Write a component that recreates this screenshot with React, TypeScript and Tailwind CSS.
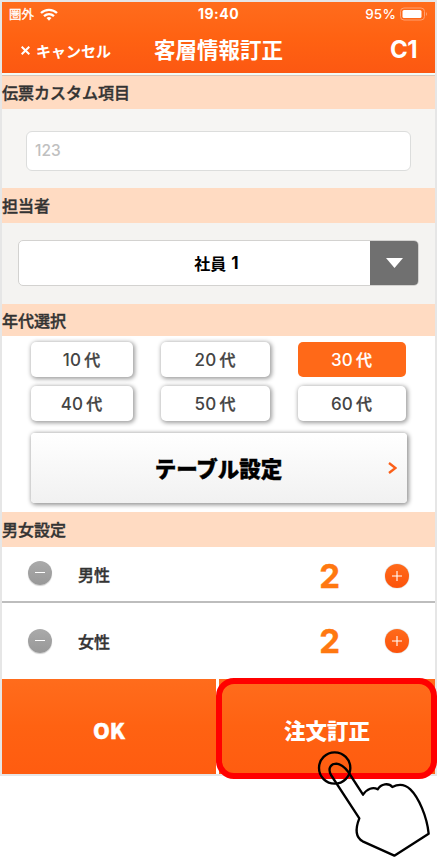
import React from "react";

type Age = { n: string; on?: boolean };

const ages: Age[] = [
  { n: "10" },
  { n: "20" },
  { n: "30", on: true },
  { n: "40" },
  { n: "50" },
  { n: "60" },
];

function Band({ children, className }: { children: React.ReactNode; className: string }) {
  return (
    <div className={`flex shrink-0 items-center bg-[#ffdbc2] pb-px text-base leading-none font-medium text-[#333] [-webkit-text-stroke:0.4px] ${className}`}>
      {children}
    </div>
  );
}

function AgeButton({ n, on }: Age) {
  return (
    <button
      className={`flex h-[35px] items-center justify-center gap-[3px] rounded-[5px] text-[17px] leading-none font-medium ${
        on
          ? "bg-[#ff6918] text-white"
          : "bg-white text-[#444] shadow-[1px_1px_4px_1px_rgba(0,0,0,0.38)]"
      }`}
    >
      <span className="pt-0.5 font-[Inter] tracking-[0.2px]">{n}</span>
      <span className="pb-px text-[16px] [-webkit-text-stroke:0.3px]">代</span>
    </button>
  );
}

function Counter({
  label,
  value,
  className,
  minusClass,
  valueClass,
}: {
  label: string;
  value: string;
  className: string;
  minusClass: string;
  valueClass: string;
}) {
  return (
    <div className={`flex shrink-0 items-center px-[26px] ${className}`}>
      <button className={`flex size-6 items-center justify-center rounded-full bg-linear-to-b from-[#aaa] to-[#989898] shadow-[0_1px_1px_rgba(0,0,0,0.2)] ${minusClass}`}>
        <span className="h-px w-[10px] bg-white" />
      </button>
      <span className="ml-[26px] text-base leading-none font-medium text-[#333] [-webkit-text-stroke:0.4px]">{label}</span>
      <div className={`ml-auto flex items-center ${valueClass}`}>
        <span className="pt-0.5 font-[Inter] text-[33px] leading-none font-bold text-[#ff7810] [-webkit-text-stroke:0.4px]">{value}</span>
        <button className="ml-[45px] flex size-6 items-center justify-center rounded-full bg-linear-to-b from-[#ff6a1a] to-[#fc520a] shadow-[0_0_1px_rgba(0,0,0,0.5)]">
          <svg width="10" height="10" viewBox="0 0 10 10" stroke="white" strokeWidth="1.1">
            <path d="M5 0V10M0 5H10" />
          </svg>
        </button>
      </div>
    </div>
  );
}

export default function App() {
  return (
    <div className="relative h-[857px] w-[437px] overflow-hidden bg-white font-['Noto_Sans_CJK_JP',sans-serif]">
      <div className="flex h-[776px] flex-col border-2 border-[#e6e6e6] bg-white">
        <header className="h-[71px] shrink-0 bg-linear-to-b from-[#ff6c1c] via-[#ff6212] to-[#fc5812] text-white">
          <div className="flex h-6 items-center px-[7px] leading-none">
            <div className="flex flex-1 items-center gap-[6px]">
              <span className="text-[12.5px] [-webkit-text-stroke:0.3px]">圏外</span>
              <svg width="18" height="13" viewBox="0 0 18 13" fill="none" stroke="white" strokeWidth="2.3">
                <path d="M1 5C5.500 .7 12.500 .7 17 5M4 8.200C7 5.500 11 5.500 14 8.200" />
                <path d="M6.500 10Q9 8 11.500 10L9 12.700Z" fill="white" stroke="none" />
              </svg>
            </div>
            <span className="font-[Inter] text-[14px] font-bold tracking-[0.5px]">19:40</span>
            <div className="flex flex-1 items-center justify-end gap-[4px]">
              <span className="pt-px font-[Inter] text-[13.5px] font-medium tracking-[0.2px]">95%</span>
              <svg width="28" height="14" viewBox="0 0 28 14">
                <rect x="0.5" y="1" width="24" height="12" rx="3.500" fill="none" stroke="#ffa070" />
                <rect x="2.500" y="3" width="19" height="8" rx="1.500" fill="white" />
                <path d="M26 5Q28 7 26 9Z" fill="#ffa070" />
              </svg>
            </div>
          </div>
          <div className="flex h-[47px] items-center leading-none">
            <span className="flex w-[152px] items-center gap-[6px] pt-0.5 pl-[19px] text-[15px] font-bold">
              <svg width="9" height="9" viewBox="0 0 9 9" stroke="white" strokeWidth="2">
                <path d="M.7 .7 8.300 8.300M8.300 .7 .7 8.300" />
              </svg>
              キャンセル
            </span>
            <span className="pb-0.5 text-[21.5px] font-bold">客層情報訂正</span>
            <span className="mr-[18px] ml-auto pt-px font-[Inter] text-[24px] font-bold tracking-[-0.5px]">C1</span>
          </div>
        </header>
        <div className="h-[3px] shrink-0 border-b border-[#d8c6ba] bg-[#f1fbf8]" />
        <Band className="h-[33px]">伝票カスタム項目</Band>
        <div className="h-[79px] shrink-0 bg-[#f6f5f3] px-6 pt-[22px]">
          <div className="flex h-10 items-center rounded-[6px] border border-[#dcdddc] bg-white pl-2 font-[Inter] text-[15.5px] leading-none font-medium text-[#c0c0c0]">
            123
          </div>
        </div>
        <Band className="h-[35px]">担当者</Band>
        <div className="h-[81px] shrink-0 bg-[#f4f3f1] pt-[17px] pr-4 pl-4">
          <div className="flex h-[46px] overflow-hidden rounded-[5px] border border-[#d3d2d0] bg-white">
            <div className="flex flex-1 items-center justify-center pl-[44px] text-[16px] leading-none font-bold whitespace-pre text-black">
              社員<span className="pl-[5px] font-[Inter] text-[17px]">1</span>
            </div>
            <div className="-my-px -mr-px flex w-[49px] items-center justify-center bg-[#707070]">
              <svg width="17" height="10" viewBox="0 0 17 10">
                <path d="M0 0H17L8.500 10Z" fill="white" />
              </svg>
            </div>
          </div>
        </div>
        <Band className="h-8">年代選択</Band>
        <section className="h-[176px] shrink-0 px-[28.500px] pt-[6px]">
          <div className="grid grid-cols-[102px_109px_108px] gap-x-[28px] gap-y-[9px]">
            {ages.map((a) => (
              <AgeButton key={a.n} {...a} />
            ))}
          </div>
          <button className="mt-3 flex h-[70px] w-[376px] items-center rounded-[4px] bg-linear-to-b from-white to-[#f1f1f1] pr-[10px] leading-none shadow-[1px_1px_4px_1px_rgba(0,0,0,0.42)]">
            <span className="flex-1 pl-[19px] text-center text-[21.5px] font-black text-black [-webkit-text-stroke:0.4px]">テーブル設定</span>
            <svg width="9" height="12" viewBox="0 0 9 12" fill="none" stroke="#fb5f18" strokeWidth="2.4">
              <path d="M1 1 7.500 6 1 11" />
            </svg>
          </button>
        </section>
        <Band className="h-[35px]">男女設定</Band>
        <Counter label="男性" value="2" className="h-[54px]" minusClass="mb-[3px]" valueClass="pt-[3px]" />
        <div className="h-0.5 shrink-0 bg-[#bdbdbd]" />
        <Counter label="女性" value="2" className="h-[76px]" minusClass="mb-px" valueClass="pb-px" />
        <footer className="flex h-[95px] shrink-0 gap-[3px] text-[21.5px] leading-none font-black text-white">
          <button className="w-[214px] bg-linear-to-b from-[#ff6c1c] via-[#ff6212] to-[#ff5c10] pt-[7px] [-webkit-text-stroke:0.4px]">OK</button>
          <button className="flex-1 bg-linear-to-b from-[#ff6c1c] via-[#ff6212] to-[#ff5c10] pt-[7px]">注文訂正</button>
        </footer>
      </div>
      <div className="absolute top-[678px] left-[216px] h-[101px] w-[221px] rounded-[18px] border-[6px] border-[#f00]" />
      <svg className="absolute top-[670px] left-[217px]" width="220" height="187" viewBox="0 0 660 561" fill="none" stroke="black" strokeWidth="7" strokeLinejoin="round">
        <circle cx="353" cy="294" r="47" />
        <path d="M427 445 342 315C330 292 345 281 358 281C372 282 382 290 394 306L438 374C450 356 468 350 482 358C492 341 515 338 526 351C545 341 565 344 580 358C605 382 630 440 635 491L532 557 437 514C413 500 417 470 427 445Z" />
      </svg>
    </div>
  );
}
